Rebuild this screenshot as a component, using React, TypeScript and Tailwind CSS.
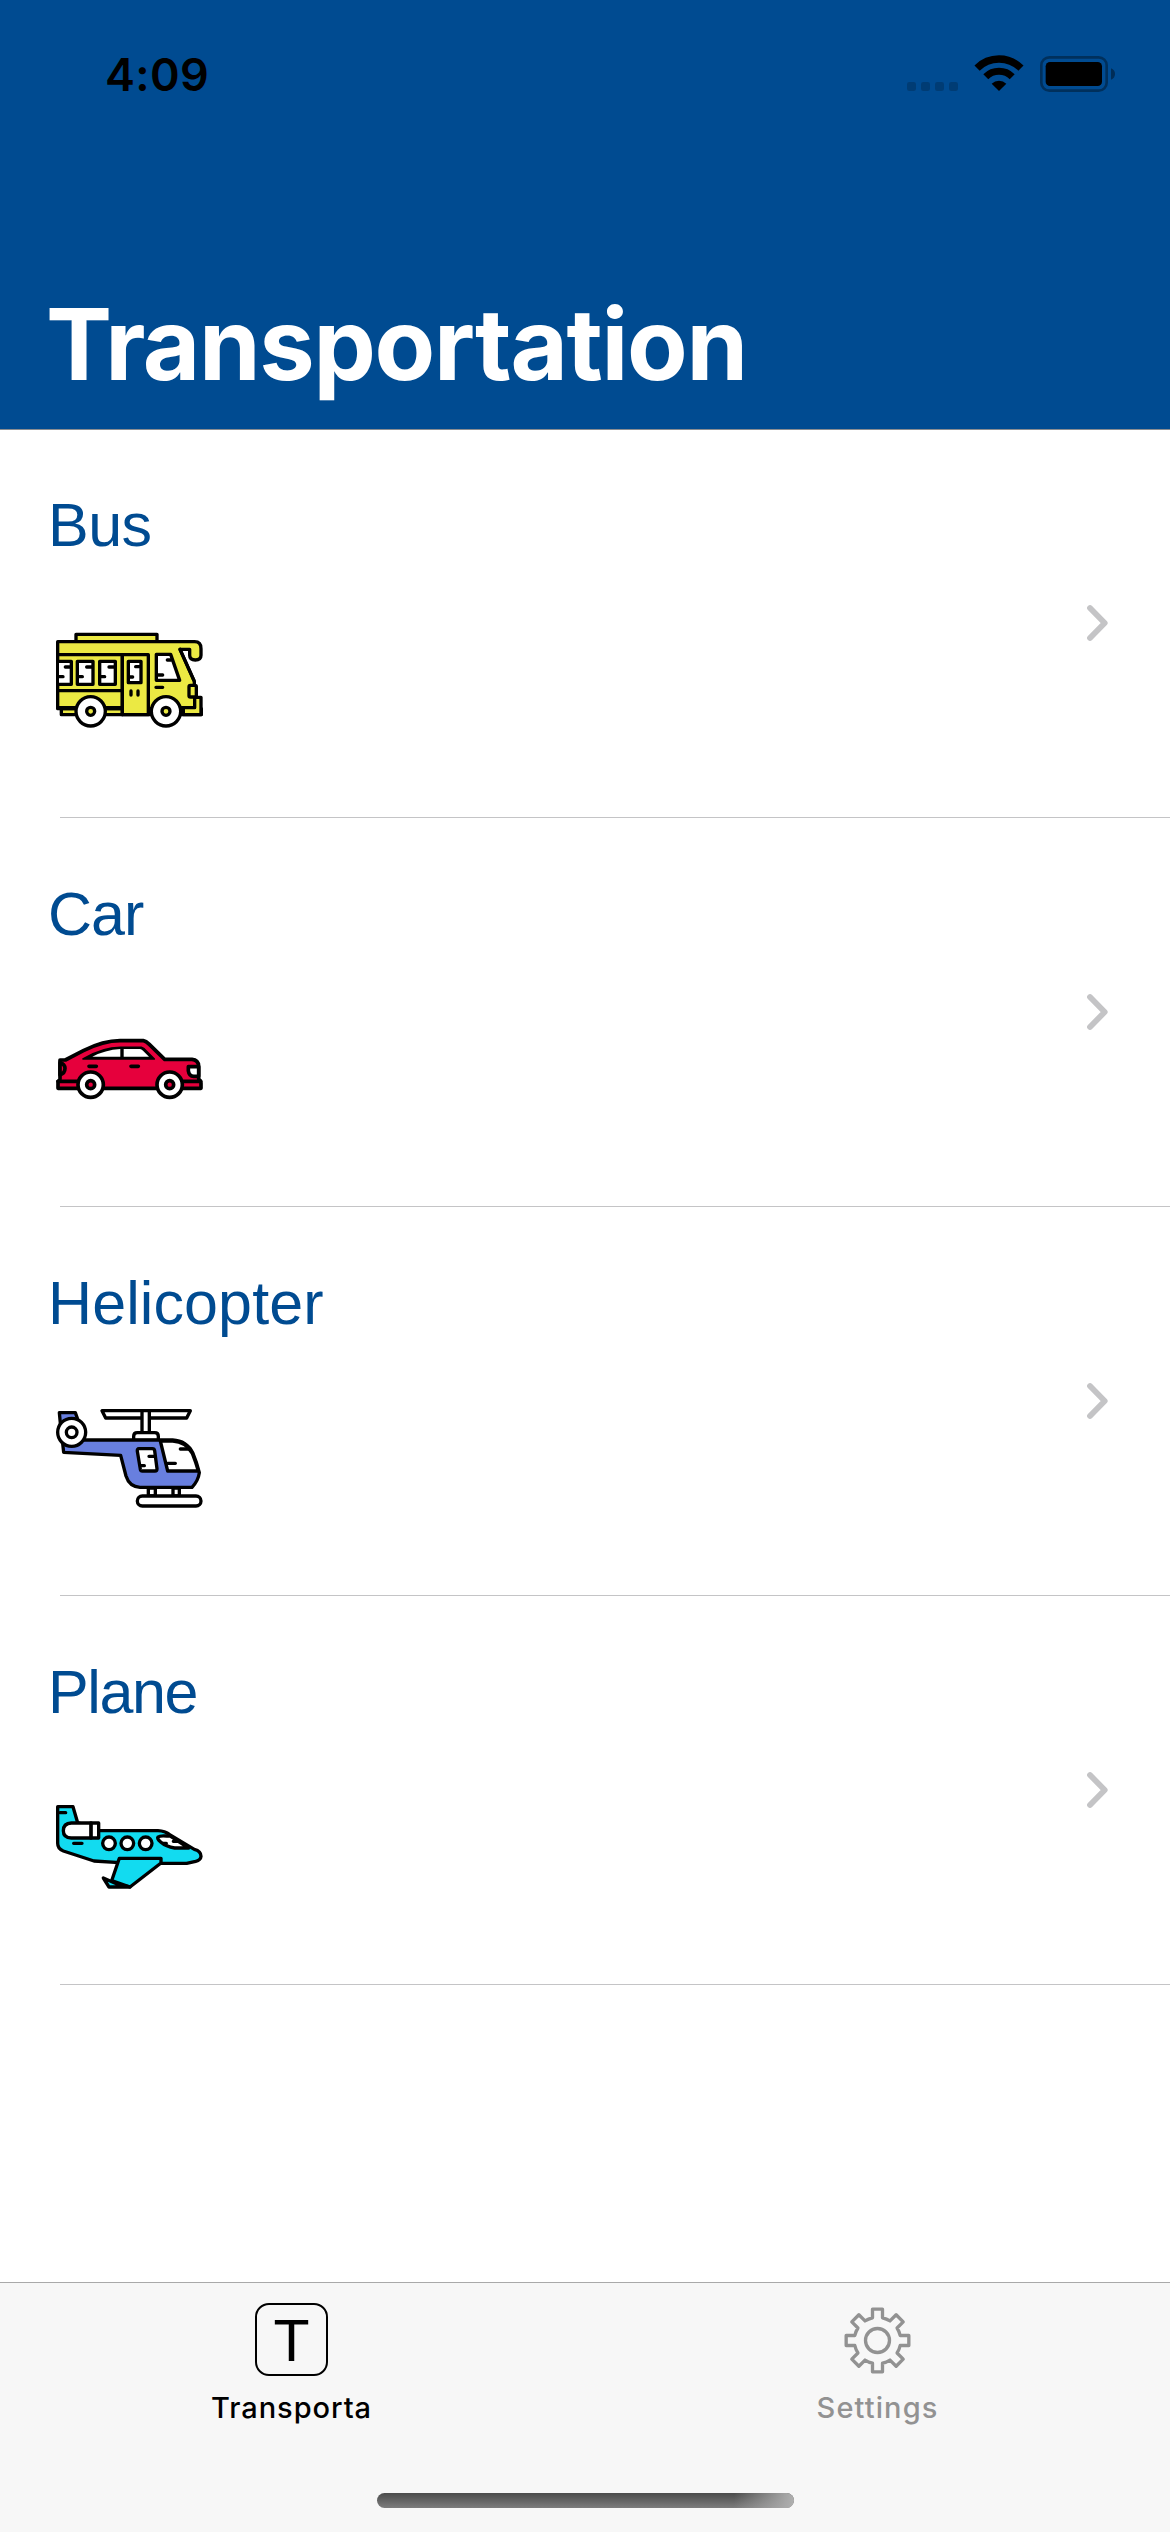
import React from "react";

const gearPath = (() => {
  const profile = [
    [-15, -68],
    [-15, -94],
    [15, -94],
    [15, -68],
  ];
  let d = "";
  for (let k = 0; k < 8; k++) {
    const a = (k * Math.PI) / 4;
    profile.forEach(([x, y], i) => {
      const px = (x * Math.cos(a) - y * Math.sin(a)).toFixed(1);
      const py = (x * Math.sin(a) + y * Math.cos(a)).toFixed(1);
      if (k === 0 && i === 0) d += `M${px} ${py}`;
      else if (i === 0) d += `A70 70 0 0 1 ${px} ${py}`;
      else d += `L${px} ${py}`;
    });
  }
  return d + "A70 70 0 0 1 -15 -68Z";
})();

const iconClass = "block h-[150px] w-[171px]";

function BusIcon() {
  return (
    <svg className={iconClass} viewBox="27 -18 513 450" fill="none" stroke="#000" strokeWidth="10" strokeLinejoin="round" strokeLinecap="round">
      <rect x="108" y="73" width="243" height="24" fill="#ebe943" />
      <path d="M64 296H484V314H64Z" fill="#ebe943" />
      <path d="M53 95H464Q483 95 483 116V136Q483 150 466 150Q449 150 449 136V118H420L463 214V262H483V314H430V296H53Z" fill="#ebe943" />
      <path d="M420 118L462 212" />
      <path d="M57 134H325V314H247V134" fill="#ebe943" />
      <path d="M247 134V314M57 242H247M57 293H247M420 293H464V265" />
      <path d="M57 154H94V223H57" fill="#fff" />
      <rect x="112" y="154" width="47" height="69" fill="#fff" />
      <rect x="179" y="154" width="47" height="69" fill="#fff" />
      <rect x="265" y="154" width="38" height="64" fill="#fff" />
      <path d="M349 133H392L419 211H349Z" fill="#fff" />
      <path d="M76 171H91M58 200H69M140 171H156M115 200H127M207 171H223M182 200H194M287 170H300M269 201H278M382 150H393M352 195H368M348 232H368M273 243V255M294 243V255" />
      <rect x="447" y="226" width="22" height="35" rx="4" fill="#ebe943" />
      {[152, 378].map((x) => (
        <g key={x}>
          <circle cx={x} cy="304" r="44" fill="#fff" />
          <circle cx={x} cy="304" r="12" fill="#ebe943" />
        </g>
      ))}
    </svg>
  );
}

function CarIcon() {
  return (
    <svg className={iconClass} viewBox="27 -81 513 450" fill="none" stroke="#000" strokeWidth="11" strokeLinejoin="round" strokeLinecap="round">
      <path d="M60 120H76L130 92Q190 62 240 62H310Q318 63 328 73L374 118H456Q475 120 476 138V178Q483 182 483 190V205H54V184Q60 182 60 176Z" fill="#e6003c" />
      <path d="M129 117Q190 80 248 82H304Q308 83 313 87L343 117Z" fill="#000" strokeWidth="5" />
      <path d="M157 110Q195 90 241 87V110Z" fill="#fff" stroke="none" />
      <path d="M251 87H300Q304 88 309 92L327 110H251Z" fill="#fff" stroke="none" />
      <path d="M60 128Q75 132 75 145Q75 160 60 165Z" fill="#e6003c" />
      <path d="M54 184H112M430 184H482M147 139H169M273 139H295" />
      <path d="M476 140H445V152Q447 168 461 169H476Z" fill="#fff" />
      {[152, 389].map((x) => (
        <g key={x}>
          <circle cx={x} cy="194" r="38" fill="#fff" />
          <circle cx={x} cy="194" r="12" fill="#e6003c" />
        </g>
      ))}
    </svg>
  );
}

function HelicopterIcon() {
  return (
    <svg className={iconClass} viewBox="27 -24 513 450" fill="none" stroke="#000" strokeWidth="10" strokeLinejoin="round" strokeLinecap="round">
      <path d="M186 62H451L440 84H197Z" fill="#fff" />
      <rect x="306" y="62" width="22" height="66" fill="#fff" />
      <path d="M281 151V139Q281 128 292 128H344Q355 128 355 139V151Z" fill="#fff" />
      <path d="M325 294H346V318H325ZM399 294H418V318H399Z" fill="#fff" />
      <path d="M58 68H106L116 96V110H62Z" fill="#687fdf" />
      <path d="M68 160H100L120 150H398Q440 152 459 190Q470 216 478 248Q475 272 456 292H300Q268 290 258 258L242 196L71 187Z" fill="#687fdf" />
      <path d="M361 153H398Q438 155 457 190Q468 218 475 243H383Z" fill="#fff" />
      <path d="M297 176H337Q343 176 344 182L351 236Q351 243 345 243H307Q302 243 301 238L292 184Q291 176 297 176Z" fill="#fff" />
      <path d="M327 199H343M302 227H313M421 177H450M383 220H406" />
      <rect x="292" y="318" width="191" height="30" rx="15" fill="#fff" />
      <circle cx="95" cy="127" r="42" fill="#fff" />
      <circle cx="95" cy="127" r="16" fill="#fff" />
    </svg>
  );
}

function PlaneIcon() {
  return (
    <svg className={iconClass} viewBox="27 -57 513 450" fill="none" stroke="#000" strokeWidth="10" strokeLinejoin="round" strokeLinecap="round">
      <path d="M53 50H99L113 98L178 122H354Q375 123 389 134L463 178Q483 183 483 199Q482 210 467 214L440 220H362L238 218L162 213L70 183Q53 177 53 160Z" fill="#12dbf0" />
      <path d="M238 205H363V219L270 291L215 272Z" fill="#12dbf0" />
      <path d="M190 264L236 284L270 291H207Z" fill="#12dbf0" />
      <path d="M94 99H176V144H94Q70 143 70 122Q70 100 94 99Z" fill="#fff" />
      <path d="M153 99V144" strokeWidth="11" />
      <path d="M60 68H77M101 160H126" />
      {[207, 262, 317].map((x) => (
        <circle key={x} cx={x} cy="160" r="19" fill="#fff" />
      ))}
      <path d="M381 138H391L446 174H404Q378 170 362 156Q350 146 354 141Q360 136 381 138Z" fill="#fff" />
      <path d="M370 160H379M400 154H414" />
    </svg>
  );
}

function Chevron() {
  return (
    <svg className="block h-[40px] w-[24px]" viewBox="0 0 24 40" fill="none" stroke="#c4c4c6" strokeWidth="5.8" strokeLinecap="round" strokeLinejoin="round">
      <path d="M4 5L18.7 20L4 35" />
    </svg>
  );
}

function StatusIcons() {
  return (
    <svg className="block h-[70px] w-[240px]" viewBox="0 0 720 210" fill="#000">
      {[51, 93, 135, 177].map((x) => (
        <rect key={x} x={x} y="126" width="27" height="27" rx="7" fillOpacity="0.2" />
      ))}
      <g fill="none" stroke="#000">
        <path d="M261.2 84.2A93 93 0 0 1 392.8 84.2" strokeWidth="22" />
        <path d="M287.4 110.4A56 56 0 0 1 366.6 110.4" strokeWidth="21" />
      </g>
      <path d="M327 153L305 131A32 32 0 0 1 349 131Z" />
      <rect x="454" y="52" width="196" height="100" rx="24" fill="none" stroke="#000" strokeOpacity="0.36" strokeWidth="8" />
      <rect x="467" y="66" width="169" height="72" rx="13" />
      <path d="M663 85Q675 90 675 102Q675 114 663 119Z" fillOpacity="0.4" />
    </svg>
  );
}

const rows = [
  { name: "Bus", Icon: BusIcon, tracking: "tracking-[-0.5px]" },
  { name: "Car", Icon: CarIcon, tracking: "tracking-[-1px]" },
  { name: "Helicopter", Icon: HelicopterIcon, tracking: "tracking-[0.1px]" },
  { name: "Plane", Icon: PlaneIcon, tracking: "tracking-[-1.4px]" },
];

export default function App() {
  return (
    <div className="flex h-[2532px] w-[1170px] flex-col overflow-hidden bg-white font-['Inter',sans-serif]">
      <header className="flex h-[430px] shrink-0 flex-col border-b border-[#8a8d91] bg-[#004b91]">
        <div className="flex justify-between pt-[40px] pr-[40px] pl-[105px]">
          <span className="text-[45px] leading-[70px] font-semibold tracking-[0.3px] text-black">4:09</span>
          <StatusIcons />
        </div>
        <h1 className="mt-[174px] pl-[46px] text-[99px] leading-[120px] font-bold tracking-[-1.3px] whitespace-nowrap text-white">
          Transportation
        </h1>
      </header>

      <main className="-mt-px flex grow flex-col">
        {rows.map(({ name, Icon, tracking }) => (
          <section key={name} className="flex h-[389px] shrink-0 flex-col">
            <div className="flex grow items-center justify-between pr-[60px] pl-[49px]">
              <div className="flex h-full flex-col pt-[60px]">
                <h2 className={`-ml-px h-[115px] font-['Liberation_Sans',sans-serif] text-[61px] leading-[72px] whitespace-nowrap text-[#004b91] ${tracking}`}>
                  {name}
                </h2>
                <Icon />
              </div>
              <Chevron />
            </div>
            <div className="ml-[60px] h-px shrink-0 bg-[#c4c4c6]" />
          </section>
        ))}
      </main>

      <footer className="flex h-[250px] shrink-0 flex-col items-center border-t border-[#a9a9a9] bg-[#f7f7f7]">
        <nav className="grid h-[210px] w-full grid-cols-2">
          <div className="flex flex-col items-center pt-[20px] pr-[2px] text-black">
            <div className="flex h-[73px] w-[73px] items-center justify-center rounded-[14px] border-2 border-black font-['Liberation_Sans',sans-serif] text-[59px] leading-none">
              <span className="pt-[3px]">T</span>
            </div>
            <span className="mt-[14px] text-[29px] leading-[36px] font-medium tracking-[0.95px]">Transporta</span>
          </div>
          <div className="flex flex-col items-center pt-[21px] text-[#929292]">
            <svg className="block h-[73px] w-[73px]" viewBox="-109.5 -109.5 219 219" fill="none" stroke="currentColor" strokeWidth="10" strokeLinejoin="round">
              <path d={gearPath} />
              <circle r="36" />
            </svg>
            <span className="mt-[13px] text-[29px] leading-[36px] font-medium tracking-[1.1px]">Settings</span>
          </div>
        </nav>
        <div className="h-[15px] w-[417px] rounded-full bg-linear-to-b from-[#4c4c4c] to-[#7d7d7d]">
          <div className="ml-auto h-full w-[60px] rounded-r-full bg-linear-to-r from-transparent to-[#b0b0b0]" />
        </div>
      </footer>
    </div>
  );
}
